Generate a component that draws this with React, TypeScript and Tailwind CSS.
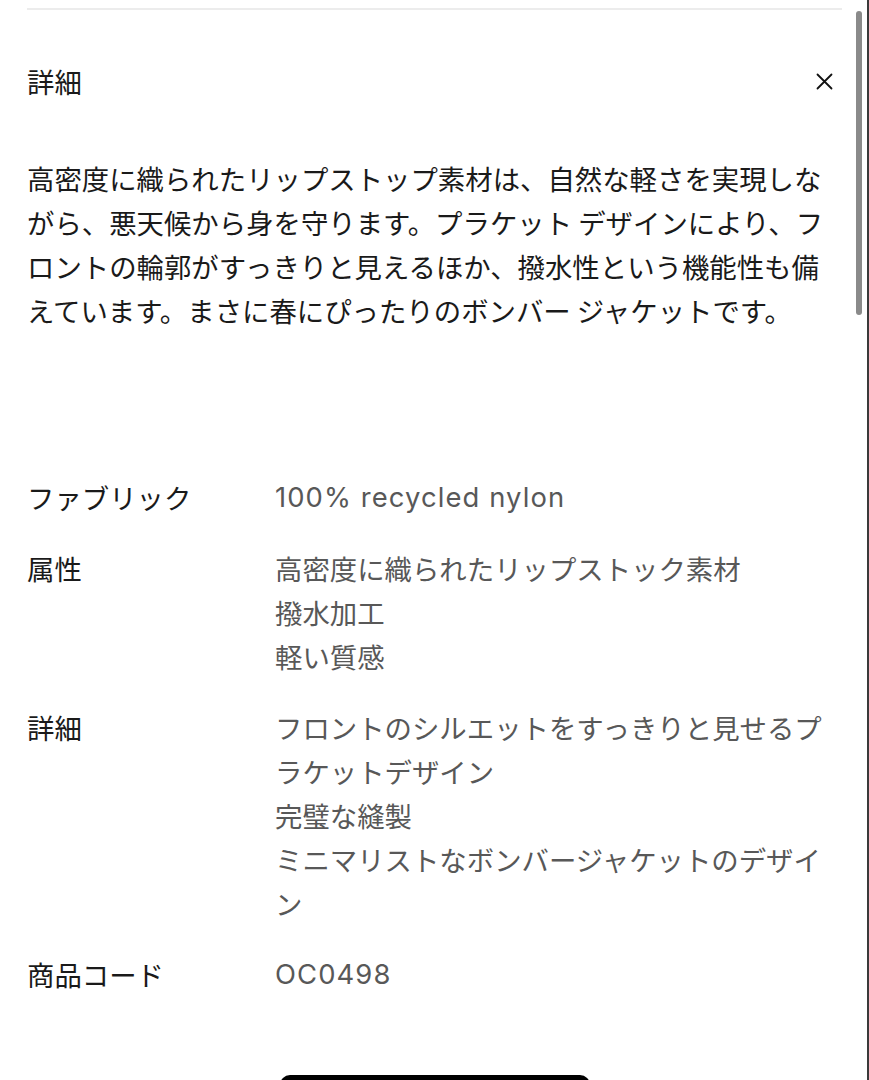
import React from "react";

const font = { fontFamily: '"Noto Sans CJK JP", "Noto Sans", sans-serif' };

function CloseIcon() {
  return (
    <svg width="17" height="17" viewBox="0 0 17 17" className="mr-[9px]">
      <path d="M1.5 1.5 L15.5 15.5 M15.5 1.5 L1.5 15.5" stroke="#111" strokeWidth="1.8" strokeLinecap="round" fill="none" />
    </svg>
  );
}

const rows: { label: string; values: string[] }[] = [
  { label: "ファブリック", values: ["100% recycled nylon"] },
  { label: "属性", values: ["高密度に織られたリップストック素材", "撥水加工", "軽い質感"] },
  { label: "詳細", values: ["フロントのシルエットをすっきりと見せるプラケットデザイン", "完璧な縫製", "ミニマリストなボンバージャケットのデザイン"] },
  { label: "商品コード", values: ["OC0498"] },
];

export default function App() {
  return (
    <div
      className="relative w-[869px] h-[1080px] overflow-hidden bg-white text-[27.4px] leading-[44px] text-[#1a1a1a]"
      style={font}
    >
      <div className="px-[27px] flex flex-col">
        <div className="mt-[8px] h-[2px] bg-[#ececec]" />
        <div className="mt-[53px] flex items-center justify-between h-[36px]">
          <div className="leading-[36px]">詳細</div>
          <CloseIcon />
        </div>
        <p className="mt-[57px] w-[808px]">
          高密度に織られたリップストップ素材は、自然な軽さを実現しながら、悪天候から身を守ります。プラケット デザインにより、フロントの輪郭がすっきりと見えるほか、撥水性という機能性も備えています。まさに春にぴったりのボンバー ジャケットです。
        </p>
        <div className="mt-[143px] flex flex-col gap-[27px]">
          {rows.map((r) => (
            <div key={r.label} className="flex">
              <div className="w-[248px] shrink-0">{r.label}</div>
              <div className="w-[560px] text-[#585858]">
                {r.values.map((v) => (
                  <div
                    key={v}
                    className={v.startsWith("100") || v.startsWith("OC") ? "tracking-[1.1px]" : ""}
                    style={v.startsWith("100") || v.startsWith("OC") ? { fontFamily: 'Inter, "Noto Sans CJK JP", sans-serif' } : undefined}
                  >
                    {v}
                  </div>
                ))}
              </div>
            </div>
          ))}
        </div>
        <div className="mt-[79px] ml-[253px] w-[310px] h-[60px] rounded-[10px] bg-black" />
      </div>
      <div className="absolute right-[7px] top-[11px] w-[6px] h-[304px] rounded-full bg-[#8a8a8a]" />
      <div className="absolute right-0 top-0 w-[2px] h-full bg-[#3a3a3a]" />
    </div>
  );
}
